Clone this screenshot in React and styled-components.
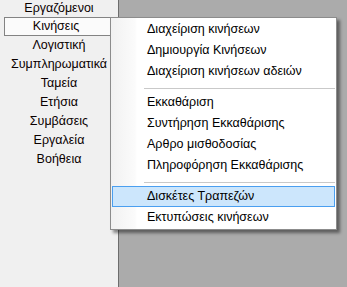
import React from "react";
import styled, { createGlobalStyle } from "styled-components";

const Global = createGlobalStyle`
  html, body { margin: 0; padding: 0; }
  body {
    width: 347px;
    height: 287px;
    overflow: hidden;
    font-family: "Liberation Sans", Arial, sans-serif;
    font-size: 12.5px;
    color: #000;
  }
`;

const Screen = styled.div`
  position: relative;
  display: flex;
  width: 347px;
  height: 287px;
  overflow: hidden;
`;

const Sidebar = styled.nav`
  width: 118px;
  flex: none;
  background: #f0f0f0;
  border-right: 1px solid #6d6d6d;
  display: flex;
  flex-direction: column;
`;

const NavItem = styled.div`
  height: ${(p) => (p.$first ? 17 : 19)}px;
  line-height: ${(p) => (p.$first ? 17 : 19)}px;
  text-align: center;
  white-space: nowrap;
  color: #0a0000;
  box-sizing: border-box;
  ${(p) =>
    p.$active &&
    `
    margin: 0 0 0 4px;
    width: 112px;
    border: 1px solid #838383;
    background: #fbfbfb;
    line-height: 17px;
    text-indent: -8px;
  `}
`;

const Workspace = styled.main`
  flex: 1;
  background: #ababab;
`;

const Menu = styled.div`
  position: absolute;
  left: 110px;
  top: 17px;
  width: 227px;
  box-sizing: border-box;
  border: 1px solid #8c8c8c;
  padding: 1px 1px 1px 1px;
  background: linear-gradient(to right, #f1f1f1 0px, #fbfbfb 24px, #ffffff 26px);
  box-shadow: 3px 3px 3px rgba(0, 0, 0, 0.45);
  display: flex;
  flex-direction: column;
`;

const MenuItem = styled.div`
  height: 21px;
  line-height: 21px;
  padding-left: 34px;
  white-space: nowrap;
  box-sizing: border-box;
  border: 1px solid ${(p) => (p.$hover ? "#4a9ff0" : "transparent")};
  background: ${(p) => (p.$hover ? "#cce6fc" : "transparent")};
  line-height: 19px;
`;

const Separator = styled.div`
  height: 1px;
  margin: 6px 0 3px 32px;
  background: #c9c9c9;
`;

const navItems = [
  "Εργαζόμενοι",
  "Κινήσεις",
  "Λογιστική",
  "Συμπληρωματικά",
  "Ταμεία",
  "Ετήσια",
  "Συμβάσεις",
  "Εργαλεία",
  "Βοήθεια",
];

const menuGroups = [
  ["Διαχείριση κινήσεων", "Δημιουργία Κινήσεων", "Διαχείριση κινήσεων αδειών"],
  ["Εκκαθάριση", "Συντήρηση Εκκαθάρισης", "Αρθρο μισθοδοσίας", "Πληροφόρηση Εκκαθάρισης"],
  ["Δισκέτες Τραπεζών", "Εκτυπώσεις κινήσεων"],
];

export default function App() {
  return (
    <>
      <Global />
      <Screen>
        <Sidebar>
          {navItems.map((t, i) => (
            <NavItem key={t} $first={i === 0} $active={i === 1}>
              {t}
            </NavItem>
          ))}
        </Sidebar>
        <Workspace />
        <Menu>
          {menuGroups.map((g, gi) => (
            <React.Fragment key={gi}>
              {gi > 0 && <Separator />}
              {g.map((t) => (
                <MenuItem key={t} $hover={t === "Δισκέτες Τραπεζών"}>
                  {t}
                </MenuItem>
              ))}
            </React.Fragment>
          ))}
        </Menu>
      </Screen>
    </>
  );
}
